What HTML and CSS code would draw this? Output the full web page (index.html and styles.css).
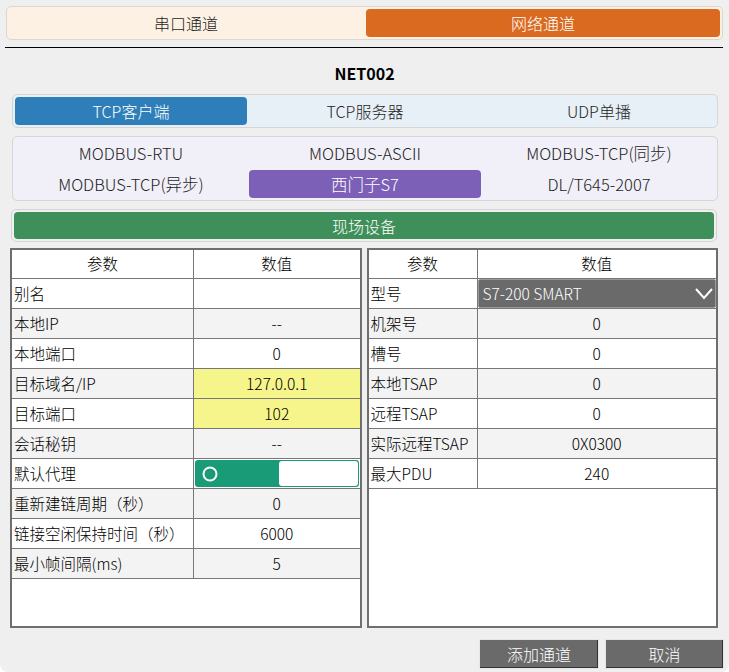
FILE: index.html
```html
<!DOCTYPE html>
<html lang="zh">
<head>
<meta charset="utf-8">
<link rel="stylesheet" href="styles.css">
</head>
<body>
<div class="page">
  <div class="seg seg-top">
    <div class="tab">串口通道</div>
    <div class="tab tab-orange">网络通道</div>
  </div>
  <div class="rule"></div>
  <div class="title">NET002</div>
  <div class="seg seg-blue">
    <div class="tab tab-blue">TCP客户端</div>
    <div class="tab">TCP服务器</div>
    <div class="tab">UDP单播</div>
  </div>
  <div class="seg seg-proto">
    <div class="tab">MODBUS-RTU</div>
    <div class="tab">MODBUS-ASCII</div>
    <div class="tab">MODBUS-TCP(同步)</div>
    <div class="tab">MODBUS-TCP(异步)</div>
    <div class="tab tab-purple">西门子S7</div>
    <div class="tab">DL/T645-2007</div>
  </div>
  <div class="bar"><div class="bar-inner">现场设备</div></div>
  <div class="tables">
    <div class="tbl tbl-left">
      <div class="row head"><div class="k">参数</div><div class="v">数值</div></div>
      <div class="row"><div class="k">别名</div><div class="v"></div></div>
      <div class="row g"><div class="k">本地IP</div><div class="v">--</div></div>
      <div class="row"><div class="k">本地端口</div><div class="v">0</div></div>
      <div class="row g"><div class="k">目标域名/IP</div><div class="v y">127.0.0.1</div></div>
      <div class="row"><div class="k">目标端口</div><div class="v y">102</div></div>
      <div class="row g"><div class="k">会话秘钥</div><div class="v">--</div></div>
      <div class="row"><div class="k">默认代理</div><div class="v">
        <div class="toggle"><svg class="knob" width="18" height="18" viewBox="0 0 18 18"><circle cx="9" cy="9" r="6.5" fill="none" stroke="#fff" stroke-width="2"/></svg><div class="toggle-off"></div></div>
      </div></div>
      <div class="row g"><div class="k">重新建链周期（秒）</div><div class="v">0</div></div>
      <div class="row"><div class="k">链接空闲保持时间（秒）</div><div class="v">6000</div></div>
      <div class="row g"><div class="k">最小帧间隔(ms)</div><div class="v">5</div></div>
      <div class="fill"></div>
    </div>
    <div class="tbl tbl-right">
      <div class="row head"><div class="k">参数</div><div class="v">数值</div></div>
      <div class="row"><div class="k">型号</div><div class="v">
        <div class="select"><span>S7-200 SMART</span><svg width="20" height="14" viewBox="0 0 20 14"><path d="M2 2 L10 11 L18 2" fill="none" stroke="#fff" stroke-width="2"/></svg></div>
      </div></div>
      <div class="row g"><div class="k">机架号</div><div class="v">0</div></div>
      <div class="row"><div class="k">槽号</div><div class="v">0</div></div>
      <div class="row g"><div class="k">本地TSAP</div><div class="v">0</div></div>
      <div class="row"><div class="k">远程TSAP</div><div class="v">0</div></div>
      <div class="row g"><div class="k">实际远程TSAP</div><div class="v">0X0300</div></div>
      <div class="row"><div class="k">最大PDU</div><div class="v">240</div></div>
      <div class="fill"></div>
    </div>
  </div>
  <div class="actions">
    <div class="btn btn-add">添加通道</div>
    <div class="btn btn-cancel">取消</div>
  </div>
</div>
</body>
</html>
```
FILE: styles.css
```css
html, body { margin: 0; padding: 0; background: #ffffff; }
body { font-family: "Noto Sans CJK SC", "Noto Sans", sans-serif; color: #000; font-weight: 300; }
.page {
  width: 729px; height: 672px; box-sizing: border-box;
  background: #efefef; border-radius: 0 0 8px 8px;
  padding-top: 6px; display: flex; flex-direction: column;
}
.seg { box-sizing: border-box; border: 1px solid #d6d6d6; border-radius: 5px; padding: 2px; display: grid; gap: 2px; }
.tab { height: 28px; display: flex; align-items: center; justify-content: center; font-size: 16px; color: #1e1e1e; border-radius: 4px; }
.seg-top { margin: 0 6px; background: #fdf1e3; border-color: #dcd6cf; grid-template-columns: 1fr 1fr; gap: 3px; }
.tab-orange { background: #d96a20; color: #fff; }
.rule { height: 1px; background: #000; margin: 7px 6px 0 5px; }
.title { height: 46px; box-sizing: border-box; padding-top: 14px; line-height: 22px; text-align: center; font-weight: bold; font-size: 16px; }
.seg-blue { margin: 0 11px 0 12px; background: #e7f0f7; grid-template-columns: 1fr 1fr 1fr; }
.tab-blue { background: #2e7fb9; color: #fff; }
.seg-proto { margin: 8px 11px 0 12px; background: #f1eff8; grid-template-columns: 1fr 1fr 1fr; row-gap: 3px; }
.seg-proto .tab { font-size: 16.5px; }
.tab-purple { background: #7c5fb6; color: #fff; }
.bar { margin: 8px 12px 0 11px; border: 1px solid #d4d4d4; border-radius: 5px; padding: 2px; }
.bar-inner { height: 27px; background: #3e8f59; border-radius: 4px; color: #fff; font-size: 16px; display: flex; align-items: center; justify-content: center; }
.tables { margin: 6px 11px 0 10px; height: 380px; display: flex; gap: 5px; }
.tbl { flex: 1; border: 2px solid #6e6e6e; background: #fff; display: flex; flex-direction: column; }
.row { height: 30px; box-sizing: border-box; border-bottom: 1px solid #777; display: flex; font-size: 15.5px; background: #fff; }
.row.head { height: 29px; }
.row.g { background: #f3f3f3; }
.k { box-sizing: border-box; border-right: 1px solid #777; padding-left: 2px; padding-bottom: 2px; display: flex; align-items: center; white-space: nowrap; }
.tbl-left .k { width: 182px; }
.tbl-right .k { width: 109px; }
.v { flex: 1; display: flex; align-items: center; justify-content: center; min-width: 0; padding-bottom: 2px; }
.head .k { justify-content: center; padding-left: 0; }
.v.y { background: #f5f58b; }
.fill { flex: 1; background: #fff; }
.toggle { flex: 1; align-self: stretch; margin: 1px 1px -1px 1px; background: #199b77; border-radius: 3px; display: flex; align-items: center; padding: 1px; }
.knob { margin-left: 5px; }
.toggle-off { margin-left: auto; width: 79px; align-self: stretch; background: #fff; border-radius: 3px; }
.select { flex: 1; align-self: stretch; margin-bottom: -2px; background: #6a6a6a; border: 1px solid #9a9a9a; border-radius: 2px; color: #fff; display: flex; align-items: center; justify-content: space-between; padding: 0 1px 2px 4px; font-size: 15.5px; }
.select svg { margin-top: 2px; }
.actions { margin: 11px 5px 0 0; display: flex; justify-content: flex-end; gap: 6px; }
.btn { height: 30px; box-sizing: border-box; background: #6a6a6a; color: #fff; font-size: 16px; display: flex; align-items: center; justify-content: center; border: 1px solid #e6e6e6; box-shadow: inset -1px -1px 0 #333; }
.btn-add { width: 120px; }
.btn-cancel { width: 119px; }
```
